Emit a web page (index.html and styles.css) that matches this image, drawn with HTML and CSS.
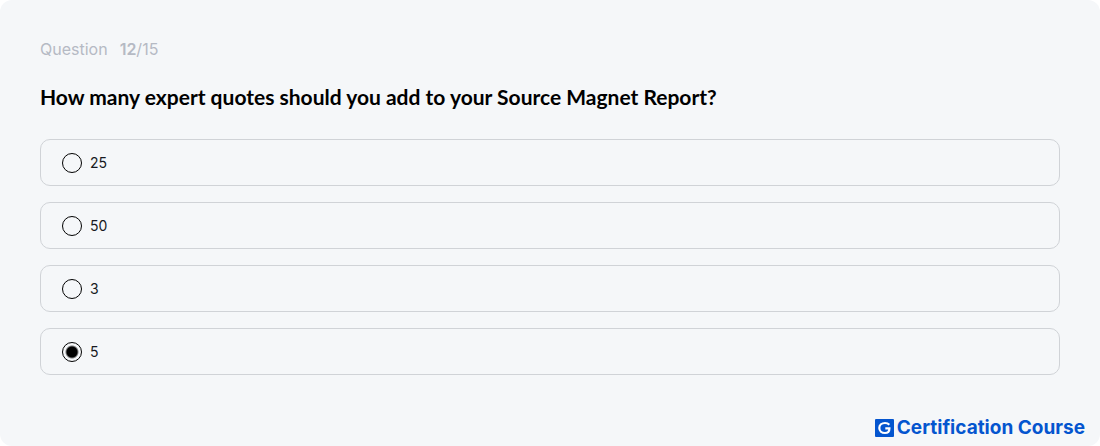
FILE: index.html
```html
<!DOCTYPE html>
<html lang="en">
<head>
    <meta charset="UTF-8">
    <title>Certification Course Quiz</title>
    <link rel="stylesheet" href="styles.css">
</head>
<body>
<main class="quiz-card">
    <form class="quiz-form">
        <p class="progress"><span>Question</span><span><strong>12</strong>/15</span></p>
        <h1 class="question" id="question">How many expert quotes should you add to your Source Magnet Report?</h1>
        <div class="options" role="radiogroup" aria-labelledby="question">
            <label class="option">
                <input type="radio" name="answer" value="25">
                <span class="option-label">25</span>
            </label>
            <label class="option">
                <input type="radio" name="answer" value="50">
                <span class="option-label">50</span>
            </label>
            <label class="option">
                <input type="radio" name="answer" value="3">
                <span class="option-label">3</span>
            </label>
            <label class="option">
                <input type="radio" name="answer" value="5" checked>
                <span class="option-label">5</span>
            </label>
        </div>
    </form>
    <footer class="brand">
        <svg class="brand-logo" viewBox="0 0 19 18" aria-hidden="true">
            <rect width="19" height="18" rx="1" fill="#0455cf"/>
            <path d="M14.3 5.7C13.2 4.5 11.8 4 10 4C6.7 4 4.3 6.1 4.3 9S6.7 14 10 14C12.2 14 14.4 13 14.4 9.4H10.3" fill="none" stroke="#fff" stroke-width="2.2"/>
        </svg>
        <span>Certification Course</span>
    </footer>
</main>
</body>
</html>
```
FILE: styles.css
```css
* {
    box-sizing: border-box;
}
body {
    margin: 0;
    background-color: #fff;
    font-family: Inter, "Liberation Sans", sans-serif;
}
.quiz-card {
    display: flex;
    flex-direction: column;
    justify-content: space-between;
    min-height: 100vh;
    padding: 39px 40px 7px;
    border-radius: 12px;
    background-color: #f5f7f9;
}
.progress {
    display: flex;
    gap: 12px;
    margin: 0;
    font-size: 16px;
    line-height: 20px;
    color: #b5bac4;
}
.progress strong {
    font-weight: 600;
}
.question {
    margin: 23px 0 27px;
    font-family: Lato, sans-serif;
    font-size: 21px;
    font-weight: 700;
    line-height: 30px;
    color: #000;
}
.options {
    display: grid;
    gap: 16px;
}
.option {
    display: flex;
    align-items: center;
    gap: 8px;
    padding: 12px 21px;
    border: 1px solid #d0d3d7;
    border-radius: 10px;
    cursor: pointer;
}
.option input {
    appearance: none;
    width: 20px;
    height: 20px;
    margin: 0;
    border: 1px solid #000;
    border-radius: 50%;
}
.option input:checked {
    background: radial-gradient(circle, #000 5px, transparent 7px);
}
.option-label {
    font-size: 14px;
    line-height: 21px;
    color: #171a21;
}
.brand {
    display: flex;
    align-items: center;
    align-self: flex-end;
    gap: 3px;
    margin-right: -25px;
    font-size: 19px;
    font-weight: 700;
    line-height: 22px;
    color: #0455cf;
}
.brand-logo {
    width: 19px;
    height: 18px;
}
```
